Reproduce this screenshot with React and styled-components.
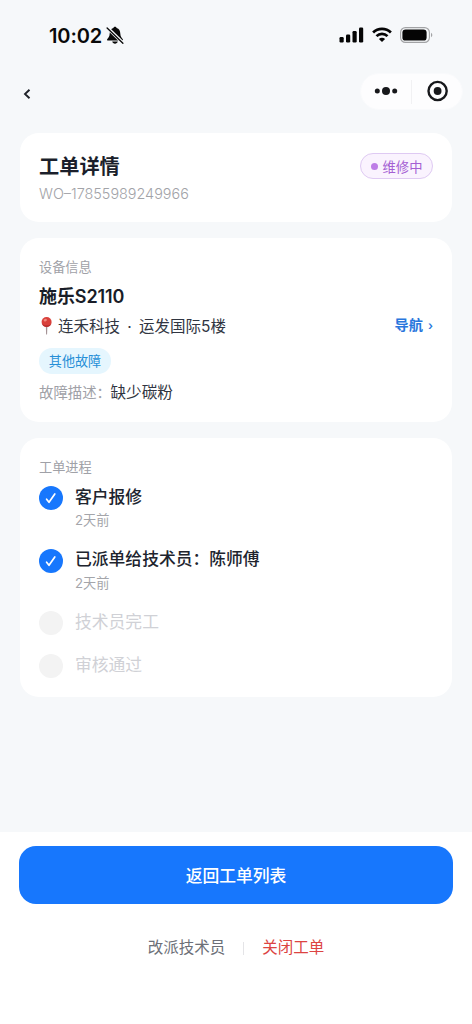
import React from 'react';
import styled, { createGlobalStyle } from 'styled-components';

const GlobalStyle = createGlobalStyle`
  * { box-sizing: border-box; }
  body {
    margin: 0;
    background: #f6f8fa;
    font-family: Inter, "Noto Sans CJK SC", sans-serif;
  }
`;

const Screen = styled.div`
  width: 472px;
  height: 1024px;
  display: flex;
  flex-direction: column;
  background: #f6f8fa;
  overflow: hidden;
`;

const StatusBar = styled.header`
  height: 70px;
  padding: 0 39px 0 49px;
  display: flex;
  align-items: center;
  justify-content: space-between;
`;

const Clock = styled.div`
  display: flex;
  align-items: center;
  gap: 4px;
  padding-top: 1px;
  color: #090909;
  font-size: 20px;
  font-weight: 600;
  letter-spacing: -0.1px;
  line-height: 24px;
`;

const StatusIcons = styled.div`
  display: flex;
  align-items: center;
  gap: 8px;
`;

const NavBar = styled.nav`
  height: 63px;
  padding: 3px 9px 0 22px;
  display: flex;
  align-items: flex-start;
  justify-content: space-between;
`;

const BackButton = styled.button`
  border: 0;
  padding: 14px 0 0;
  background: none;
  display: flex;
`;

const Capsule = styled.div`
  width: 103px;
  height: 37px;
  border-radius: 19px;
  background: #fdfdfe;
  border: 1px solid #f9fafc;
  display: flex;
  align-items: center;
`;

const CapsuleHalf = styled.div`
  flex: 1;
  height: 24px;
  padding-bottom: 1px;
  display: flex;
  align-items: center;
  justify-content: center;
  & + & { border-left: 1px solid #f1f1f3; }
`;

const Content = styled.main`
  flex: 1;
  padding: 0 20px;
  display: flex;
  flex-direction: column;
  gap: 16px;
`;

const Card = styled.section`
  height: ${(p) => p.$height}px;
  padding: ${(p) => p.$top}px 19px 0;
  border-radius: 19px;
  background: #fff;
`;

const Row = styled.div`
  display: flex;
  align-items: flex-start;
  justify-content: space-between;
`;

const Title = styled.h1`
  margin: 0;
  color: #1b1f2b;
  font-size: 20.2px;
  line-height: 28px;
  font-weight: 600;
`;

const OrderNumber = styled.div`
  margin-top: 3px;
  color: #a2a3a8;
  font-size: 14.4px;
  font-weight: 300;
  line-height: 20px;
`;

const StatusBadge = styled.span`
  width: 73px;
  height: 26px;
  border: 1px solid #dfcaf3;
  border-radius: 13px;
  background: #faf3fe;
  color: #a55fd3;
  font-size: 13.3px;
  display: flex;
  align-items: center;
  justify-content: center;
  gap: 5px;
  &::before {
    content: "";
    width: 7px;
    height: 7px;
    border-radius: 50%;
    background: #bd7de6;
  }
`;

const SectionLabel = styled.h2`
  margin: 0;
  color: #a0a1a7;
  font-size: 13.2px;
  font-weight: 400;
  line-height: 20px;
`;

const DeviceName = styled.div`
  margin-top: 8px;
  color: #191d28;
  font-size: 18px;
  font-weight: 600;
  letter-spacing: -0.1px;
  line-height: 24px;
`;

const AddressRow = styled(Row)`
  margin-top: 7px;
  height: 22px;
  align-items: center;
`;

const Address = styled.div`
  display: flex;
  align-items: center;
  color: #303541;
  font-size: 15.5px;
  line-height: 22px;
  svg { margin: 0 4px 2px 0; }
`;

const Dot = styled.span`
  width: 19px;
  text-align: center;
`;

const NavigateLink = styled.a`
  display: flex;
  gap: 5px;
  padding-bottom: 2px;
  color: #2876dd;
  font-size: 14.2px;
  font-weight: 600;
  line-height: 22px;
`;

const Chevron = styled.span`
  font-size: 12px;
  line-height: 24px;
`;

const FaultTag = styled.div`
  width: 72px;
  height: 26px;
  margin-top: 9.5px;
  border-radius: 13px;
  background: #e5f6fe;
  color: #268fd7;
  font-size: 13.1px;
  line-height: 26px;
  text-align: center;
`;

const FaultRow = styled.div`
  margin-top: 8.5px;
  display: flex;
  align-items: center;
  line-height: 22px;
`;

const FaultKey = styled.span`
  width: 71.5px;
  color: #a0a1a7;
  font-size: 14.4px;
  white-space: nowrap;
`;

const FaultValue = styled.span`
  color: #303541;
  font-size: 15.6px;
`;

const Steps = styled.ol`
  margin: 7.6px 0 0;
  padding: 0;
  list-style: none;
`;

const Step = styled.li`
  height: ${(p) => (p.$done ? 62.5 : 43)}px;
  display: flex;
  gap: 12px;
`;

const StepMark = styled.span`
  width: 24px;
  height: 24px;
  margin-top: 1.6px;
  border-radius: 50%;
  background: ${(p) => (p.$done ? '#1777fd' : '#f3f3f3')};
  display: flex;
  align-items: center;
  justify-content: center;
`;

const StepTitle = styled.div`
  color: ${(p) => (p.$done ? '#20242e' : '#d0d1d6')};
  font-size: 16.8px;
  font-weight: ${(p) => (p.$done ? 500 : 400)};
  line-height: 24px;
`;

const StepTime = styled.div`
  margin-top: 2.6px;
  color: #a4a5aa;
  font-size: 13.2px;
  line-height: 18px;
`;

const Footer = styled.footer`
  height: 192px;
  padding: 14px 19px 0;
  background: #fff;
`;

const PrimaryButton = styled.button`
  width: 100%;
  height: 58px;
  border: 0;
  border-radius: 17px;
  background: #1777fd;
  color: #fff;
  font-family: inherit;
  font-size: 16.8px;
  font-weight: 500;
  display: flex;
  align-items: center;
  justify-content: center;
`;

const Actions = styled.div`
  margin-top: 32px;
  display: flex;
  align-items: center;
  justify-content: center;
`;

const Action = styled.a`
  color: ${(p) => (p.$danger ? '#dc4442' : '#6c6f77')};
  font-size: 15.5px;
  line-height: 24px;
`;

const Divider = styled.span`
  width: 1px;
  height: 13px;
  margin: 0 18px;
  background: #e4e4e7;
`;

const MutedBell = () => (
  <svg width="18" height="19" viewBox="0 0 18 19">
    <path d="M9 .8c-1 0-1.500.6-1.600 1.200C4.800 2.800 3.800 5 3.700 7.400c-.1 3-1.100 4.100-2.400 5.500-.4.5-.4 1.700.7 1.700h14c1.100 0 1.100-1.200.7-1.700-1.300-1.400-2.300-2.500-2.400-5.500C14.200 5 13.200 2.800 10.600 2 10.500 1.400 10 .8 9 .8z" fill="#090909" />
    <path d="M6.200 15.600h5.600c-.4 1.500-1.400 2.100-2.800 2.100s-2.400-.6-2.800-2.100z" fill="#090909" />
    <path d="M1.600 2 17.300 17.300" stroke="#f6f8fa" strokeWidth="3.200" />
    <path d="M1.100 2 16.900 17.300" stroke="#090909" strokeWidth="1.300" strokeLinecap="round" />
  </svg>
);

const Signal = () => (
  <svg width="25" height="16" viewBox="0 0 25 16" fill="#050505">
    <rect x="0.500" y="10" width="4.200" height="5.500" rx="1.200" />
    <rect x="7" y="7.500" width="4.200" height="8" rx="1.200" />
    <rect x="13.500" y="4" width="4.200" height="11.500" rx="1.200" />
    <rect x="20" y="0.500" width="4.200" height="15" rx="1.200" />
  </svg>
);

const Wifi = () => (
  <svg width="20" height="16" viewBox="0 0 20 16" fill="none" stroke="#050505" strokeWidth="2.700">
    <path d="M1.100 5.500c5-4.900 12.800-4.900 17.800 0" />
    <path d="M4.500 9.100c3.100-3 7.900-3 11 0" />
    <path d="M6.900 11.900c1.800-1.600 4.400-1.600 6.200 0L10 15.100z" fill="#050505" stroke="none" />
  </svg>
);

const Battery = () => (
  <svg width="33" height="16" viewBox="0 0 33 16">
    <rect x="0.600" y="0.600" width="28.800" height="14.800" rx="4.800" fill="none" stroke="#a2a3a5" strokeWidth="1.100" />
    <rect x="2.400" y="2.400" width="24.200" height="11.200" rx="3.200" fill="#050505" />
    <path d="M31 5.800c1.800.7 1.800 3.700 0 4.400z" fill="#a2a3a5" />
  </svg>
);

const BackIcon = () => (
  <svg width="10" height="14" viewBox="0 0 10 14">
    <path d="M7.500 2.700 3 7l4.500 4.300" fill="none" stroke="#20232a" strokeWidth="1.900" />
  </svg>
);

const MoreIcon = () => (
  <svg width="24" height="10" viewBox="0 0 24 10" fill="#17181b">
    <circle cx="3.300" cy="5" r="2.500" />
    <circle cx="12" cy="5" r="4" />
    <circle cx="20.700" cy="5" r="2.500" />
  </svg>
);

const TargetIcon = () => (
  <svg width="22" height="22" viewBox="0 0 22 22">
    <circle cx="11.600" cy="11" r="9.100" fill="none" stroke="#17181b" strokeWidth="2.400" />
    <circle cx="11.600" cy="11" r="3.900" fill="#17181b" />
  </svg>
);

const PinIcon = () => (
  <svg width="15" height="20" viewBox="0 0 15 20">
    <path d="M6.800 9h1.600l-.3 9.200c0 .5-.9.500-1 0z" fill="#a39194" />
    <circle cx="7.600" cy="6" r="5" fill="#d9403b" />
    <path d="M3 8a5 5 0 0 0 9.200 0c-2.500 1.800-6.500 1.800-9.200 0z" fill="#b92d2d" />
    <ellipse cx="6.300" cy="4.100" rx="1.700" ry="1.200" fill="#f08b80" transform="rotate(-25 6.300 4.100)" />
  </svg>
);

const CheckIcon = () => (
  <svg width="12" height="14" viewBox="0 0 12 14">
    <path d="M1.600 8.200 4 11.300 9.800 2.900" fill="none" stroke="#fff" strokeWidth="1.700" strokeLinejoin="round" strokeLinecap="round" />
  </svg>
);

const steps = [
  { title: '客户报修', time: '2天前', done: true },
  { title: '已派单给技术员：陈师傅', time: '2天前', done: true },
  { title: '技术员完工', done: false },
  { title: '审核通过', done: false },
];

export default function App() {
  return (
    <>
      <GlobalStyle />
      <Screen>
        <StatusBar>
          <Clock>10:02<MutedBell /></Clock>
          <StatusIcons><Signal /><Wifi /><Battery /></StatusIcons>
        </StatusBar>
        <NavBar>
          <BackButton aria-label="返回"><BackIcon /></BackButton>
          <Capsule>
            <CapsuleHalf><MoreIcon /></CapsuleHalf>
            <CapsuleHalf><TargetIcon /></CapsuleHalf>
          </Capsule>
        </NavBar>
        <Content>
          <Card $height={89} $top={20}>
            <Row>
              <Title>工单详情</Title>
              <StatusBadge>维修中</StatusBadge>
            </Row>
            <OrderNumber>WO–17855989249966</OrderNumber>
          </Card>
          <Card $height={184.400} $top={19}>
            <SectionLabel>设备信息</SectionLabel>
            <DeviceName>施乐S2110</DeviceName>
            <AddressRow>
              <Address><PinIcon />连禾科技<Dot>·</Dot>运发国际5楼</Address>
              <NavigateLink>导航<Chevron>›</Chevron></NavigateLink>
            </AddressRow>
            <FaultTag>其他故障</FaultTag>
            <FaultRow>
              <FaultKey>故障描述：</FaultKey>
              <FaultValue>缺少碳粉</FaultValue>
            </FaultRow>
          </Card>
          <Card $height={259} $top={18.600}>
            <SectionLabel>工单进程</SectionLabel>
            <Steps>
              {steps.map((s) => (
                <Step key={s.title} $done={s.done}>
                  <StepMark $done={s.done}>{s.done && <CheckIcon />}</StepMark>
                  <div>
                    <StepTitle $done={s.done}>{s.title}</StepTitle>
                    {s.time && <StepTime>{s.time}</StepTime>}
                  </div>
                </Step>
              ))}
            </Steps>
          </Card>
        </Content>
        <Footer>
          <PrimaryButton>返回工单列表</PrimaryButton>
          <Actions>
            <Action>改派技术员</Action>
            <Divider />
            <Action $danger>关闭工单</Action>
          </Actions>
        </Footer>
      </Screen>
    </>
  );
}
